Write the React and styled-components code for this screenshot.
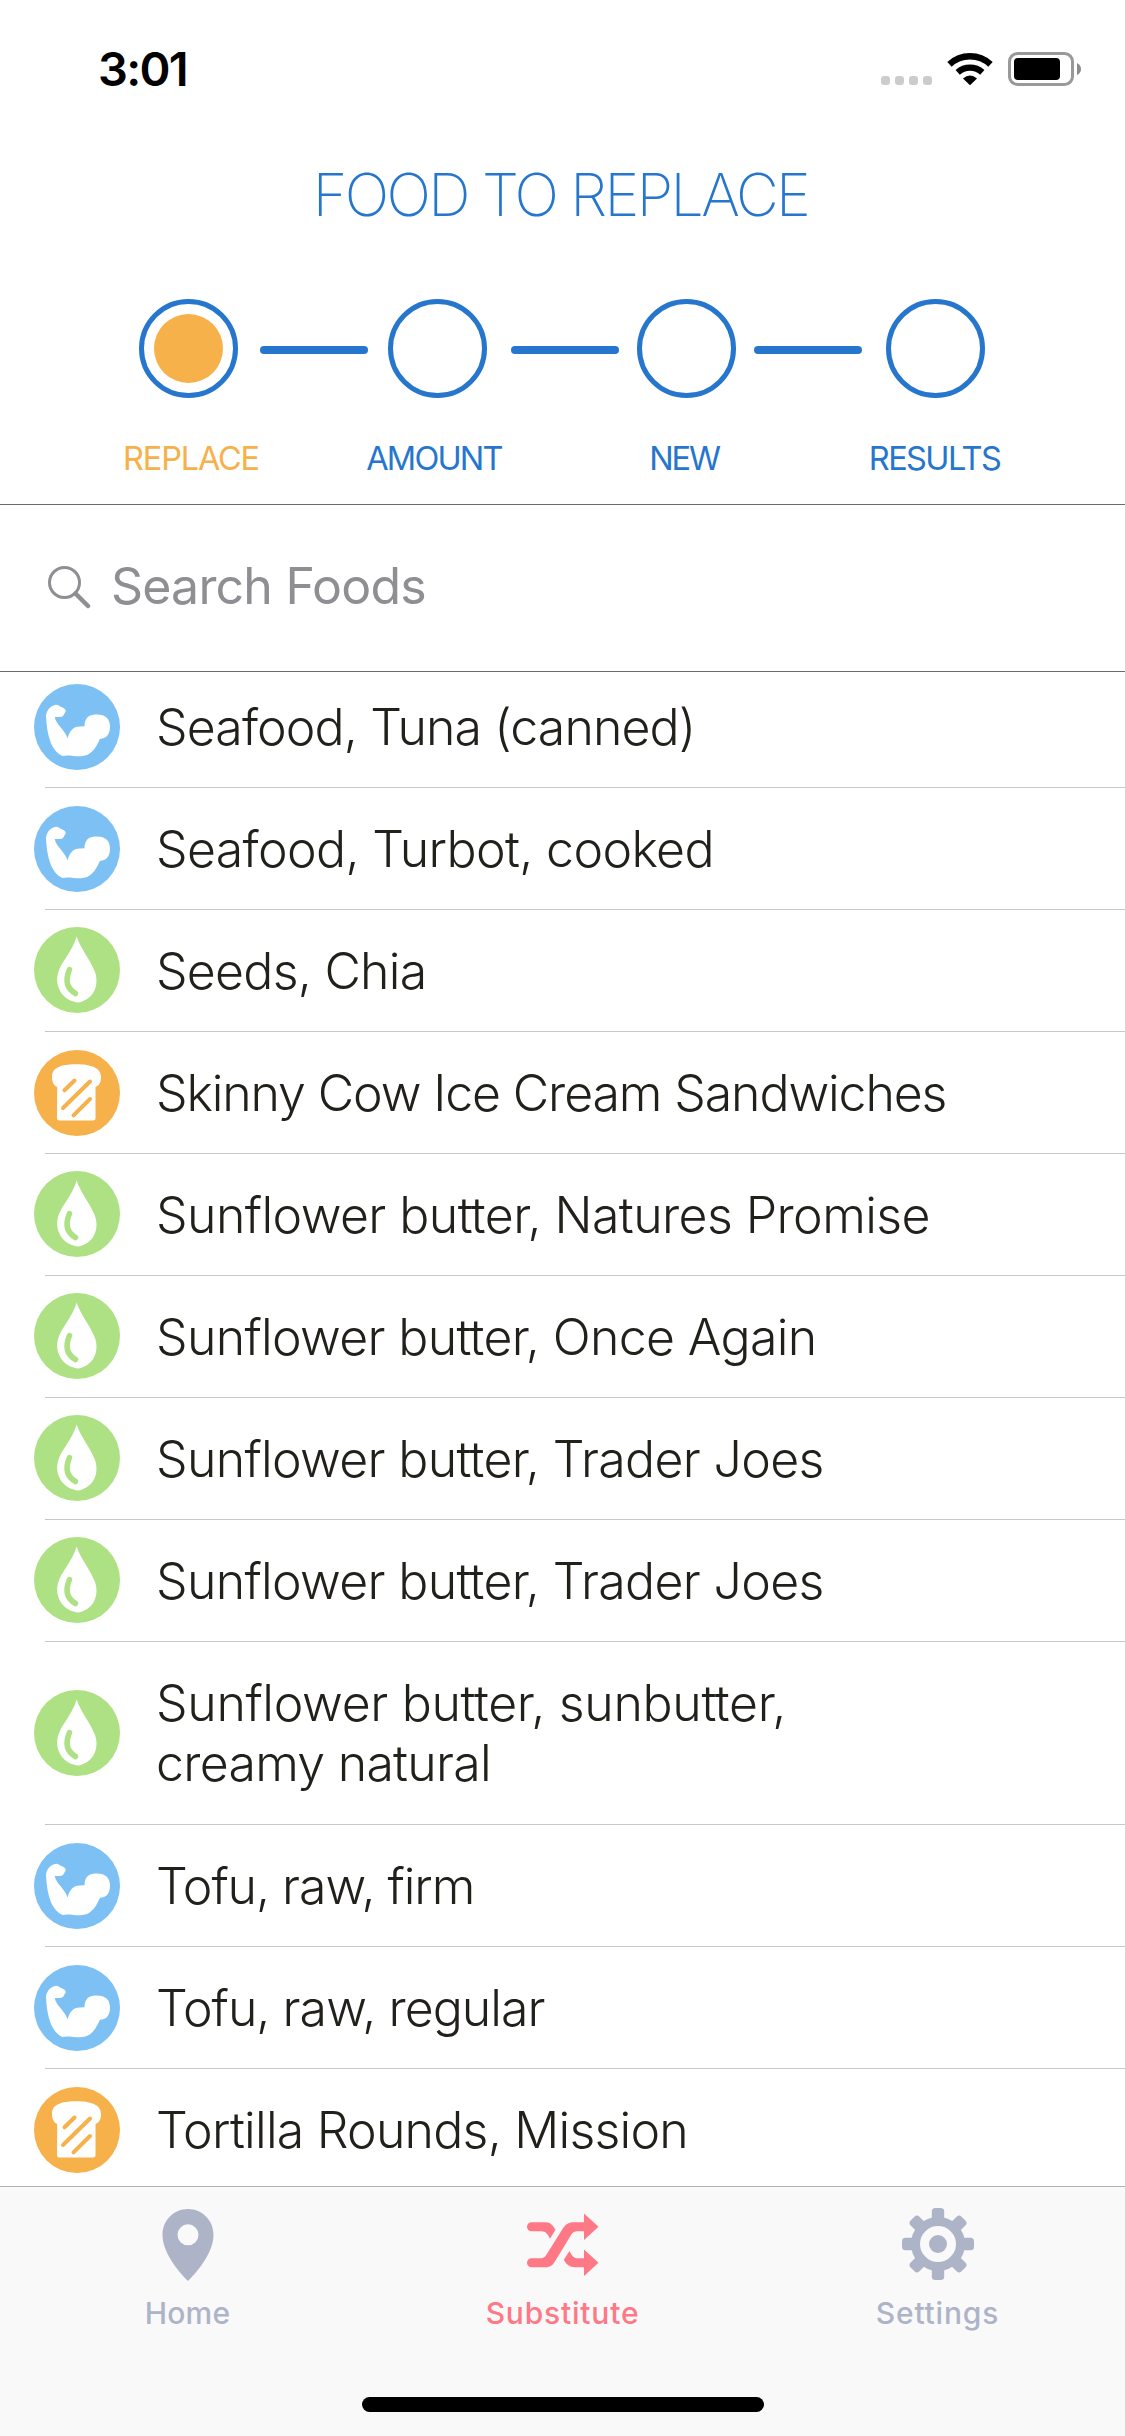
import React from "react";
import styled, { createGlobalStyle } from "styled-components";

const BLUE = "#2676ce";
const ORANGE = "#f6b14a";
const SKY = "#7dc0f4";
const GREEN = "#aee183";
const MUTED = "#aeb4c8";
const CORAL = "#ff7885";

const GlobalStyle = createGlobalStyle`
  *, *::before, *::after { box-sizing: border-box; }
  body { margin: 0; background: #fff; }
`;

const Screen = styled.div`
  width: 1125px;
  height: 2436px;
  display: flex;
  flex-direction: column;
  background: #fff;
  font-family: Inter, "Liberation Sans", sans-serif;
  overflow: hidden;
`;

const StatusBar = styled.header`
  height: 132px;
  flex: none;
  display: flex;
  justify-content: space-between;
  padding: 0 44px 0 98px;
`;

const Clock = styled.time`
  margin-top: 43px;
  font-size: 47px;
  line-height: 52px;
  font-weight: 600;
  letter-spacing: -1.7px;
  color: #000;
`;

const StatusIcons = styled.div`
  display: flex;
  align-items: flex-start;
  padding-top: 52px;
`;

const Title = styled.h1`
  flex: none;
  margin: 0;
  padding-right: 4px;
  height: 126px;
  line-height: 126px;
  text-align: center;
  font-size: 59px;
  font-weight: 200;
  letter-spacing: -2.6px;
  color: ${BLUE};
`;

const Stepper = styled.nav`
  flex: none;
  height: 247px;
  padding: 41px 89px 0 90px;
  border-bottom: 1px solid #6c6c70;
`;

const Track = styled.div`
  display: flex;
  padding-left: 49px;
`;

const StepDot = styled.span`
  width: 99px;
  height: 99px;
  flex: none;
  border: 5px solid ${BLUE};
  border-radius: 50%;
  display: grid;
  place-items: center;
  &::after {
    content: "";
    width: 69px;
    height: 69px;
    border-radius: 50%;
    background: ${(p) => (p.$active ? ORANGE : "transparent")};
  }
`;

const Connector = styled.span`
  flex: none;
  width: 108px;
  height: 8px;
  margin: 47px ${(p) => p.$after}px 0 ${(p) => p.$before}px;
  border-radius: 4px;
  background: ${BLUE};
`;

const StepLabels = styled.div`
  display: flex;
  margin-top: 41px;
`;

const StepLabel = styled.span`
  flex: none;
  width: ${(p) => p.$width}px;
  text-align: center;
  white-space: nowrap;
  font-size: 32.5px;
  line-height: 40px;
  font-weight: 400;
  letter-spacing: ${(p) => p.$track}px;
  color: ${(p) => (p.$active ? ORANGE : BLUE)};
`;

const SearchBar = styled.label`
  flex: none;
  height: 167px;
  display: flex;
  align-items: center;
  gap: 20px;
  padding: 0 48px 1px;
  border-bottom: 1px solid #6c6c70;
`;

const SearchInput = styled.input`
  flex: 1;
  border: 0;
  outline: 0;
  padding: 0;
  margin-bottom: 3px;
  background: transparent;
  font: 400 50px/60px Inter, "Liberation Sans", sans-serif;
  letter-spacing: -0.8px;
  &::placeholder { color: #8e8e93; opacity: 1; }
`;

const FoodList = styled.ul`
  flex: 1;
  min-height: 0;
  margin: 0;
  padding: 0;
  list-style: none;
  overflow: hidden;
  & > li:first-child { margin-top: -6px; }
`;

const FoodRow = styled.li`
  height: ${(p) => (p.$tall ? 183 : 122)}px;
  margin-left: 45px;
  border-bottom: 1px solid #c8c7cc;
  display: flex;
  align-items: center;
  gap: 36px;
`;

const FoodIcon = styled.svg`
  width: 86px;
  height: 86px;
  flex: none;
  margin: ${(p) => p.$top || 0}px 0 ${(p) => p.$bottom || 0}px -11px;
`;

const FoodName = styled.div`
  color: #22201b;
  font-size: 50px;
  line-height: 60px;
  font-weight: 300;
`;

const NameLine = styled.div`
  white-space: nowrap;
  letter-spacing: ${(p) => p.$track}px;
`;

const TabBar = styled.nav`
  flex: none;
  height: 250px;
  border-top: 1px solid #b2b2b2;
  background: #f9f9f9;
  display: flex;
  flex-direction: column;
  align-items: center;
`;

const Tabs = styled.div`
  width: 100%;
  display: grid;
  grid-template-columns: repeat(3, 1fr);
  height: 210px;
`;

const Tab = styled.a`
  display: flex;
  flex-direction: column;
  align-items: center;
  padding-top: 20px;
  color: ${(p) => (p.$active ? CORAL : MUTED)};
`;

const TabIcon = styled.svg`
  width: 76px;
  height: 76px;
  fill: currentColor;
`;

const TabLabel = styled.span`
  margin-top: 11px;
  font-size: 30px;
  line-height: 38px;
  font-weight: 500;
  letter-spacing: ${(p) => p.$track}px;
`;

const HomeIndicator = styled.div`
  width: 402px;
  height: 15px;
  border-radius: 8px;
  background: #000;
`;

const Protein = () => (
  <FoodIcon viewBox="0 0 86 86" $top={1}>
    <circle cx="43" cy="43" r="43" fill={SKY} />
    <path
      fill="#fff"
      d="M12 32C12.500 26 17 21.500 22 20.800C24 20.600 26 22.500 28.500 23.500C30.500 24.200 32 26 31.800 27.200L29 32C27 33.500 24 33 20.800 33C21.800 40.500 30 44.500 33.700 54.500C35 47 40 42.300 46 42.600L50.500 42.300C50.500 34 55 30.500 61.500 30.500C71.500 30 76 35 76 42.500C76 50 73 54.500 66 54.800C61 66 56 72 47 72.200C40 72.400 34 70.500 28.500 72C22 69.500 18 62 16.500 58C13.500 50 12.500 41 12 32Z"
    />
  </FoodIcon>
);

const Fat = () => (
  <FoodIcon viewBox="0 0 86 86" $bottom={1}>
    <circle cx="43" cy="43" r="43" fill={GREEN} />
    <path
      fill="#fff"
      d="M42.700 9.500C46 21 56 32 61 45C66 60 58 73 44.500 75.500C31 74.500 20 62 24 46C27 35 38 25 42.700 9.500Z"
    />
    <path d="M35.500 42.500Q28.500 59 41.500 66.500" fill="none" stroke={GREEN} strokeWidth="5.500" strokeLinecap="round" />
  </FoodIcon>
);

const Carb = () => (
  <FoodIcon viewBox="0 0 86 86">
    <circle cx="43" cy="43" r="43" fill={ORANGE} />
    <path
      fill="#fff"
      d="M23.200 37C19 35 18 31 18 26.500C18 16 31 14.300 42.700 14.300C55 14.300 67 17 67 27C67 32 65.500 35.500 61.500 37V68Q61.500 70.500 59 70.500H25.500Q23 70.500 23 68Z"
    />
    <path
      d="M30.500 40.300L40.500 30.500M29 58L56 31.500M39.500 65.300L56 49"
      fill="none"
      stroke={ORANGE}
      strokeWidth="4"
      strokeLinecap="round"
    />
  </FoodIcon>
);

const ICONS = { protein: Protein, fat: Fat, carb: Carb };

const FOODS = [
  { kind: "protein", lines: [["Seafood, Tuna (canned)", -0.88]] },
  { kind: "protein", lines: [["Seafood, Turbot, cooked", -0.64]] },
  { kind: "fat", lines: [["Seeds, Chia", -0.75]] },
  { kind: "carb", lines: [["Skinny Cow Ice Cream Sandwiches", -1.12]] },
  { kind: "fat", lines: [["Sunflower butter, Natures Promise", -0.57]] },
  { kind: "fat", lines: [["Sunflower butter, Once Again", -0.67]] },
  { kind: "fat", lines: [["Sunflower butter, Trader Joes", -0.67]] },
  { kind: "fat", lines: [["Sunflower butter, Trader Joes", -0.67]] },
  { kind: "fat", lines: [["Sunflower butter, sunbutter,", -0.33], ["creamy natural", -0.72]] },
  { kind: "protein", lines: [["Tofu, raw, firm", -1.05]] },
  { kind: "protein", lines: [["Tofu, raw, regular", -0.96]] },
  { kind: "carb", lines: [["Tortilla Rounds, Mission", -0.77]] },
];

const StatusGlyphs = () => (
  <svg width="202" height="34" viewBox="879 52 202 34">
    <g fill="#ccc">
      {[881, 895, 909, 923].map((x) => (
        <rect key={x} x={x} y="76" width="9" height="9" rx="3.200" />
      ))}
    </g>
    <g fill="none" stroke="#000" strokeWidth="6.400">
      <path d="M949.500 64.300A30 30 0 0 1 990.500 64.300" />
      <path d="M957.700 72.300A18.500 18.500 0 0 1 982.300 72.300" />
    </g>
    <path d="M963 78.500Q970 72.300 977 78.500L970 85.200Z" />
    <rect x="1009.500" y="53.500" width="63" height="31" rx="8" fill="none" stroke="#999" strokeWidth="3" />
    <rect x="1014" y="58" width="46" height="22" rx="4" />
    <path d="M1077 63Q1081 65 1081 69T1077 75Z" fill="#8c8c8c" />
  </svg>
);

const HomeTab = () => (
  <TabIcon viewBox="0 0 76 76">
    <path
      fillRule="evenodd"
      d="M38 2C52 2 63.500 13 63.500 28C63.500 44 50 62 38 74C26 62 12.500 44 12.500 28C12.500 13 24 2 38 2ZM38 17.300A10.500 10.500 0 1 0 38 38.300A10.500 10.500 0 1 0 38 17.300Z"
    />
  </TabIcon>
);

const SubstituteTab = () => (
  <TabIcon viewBox="0 0 76 76">
    <path d="M6.500 15.300H21C25.500 15.300 28 18.500 30.500 22.800L25 31.800C22.500 27 21 24.300 16 24.300H6.500A4.500 4.500 0 0 1 6.500 15.300Z" />
    <path d="M6.500 51.300H15C19 51.300 20.500 49.500 22.500 46L37.500 22C40.500 17.500 43.500 15.300 48.500 15.300H59V6.500L73.500 19.800L59 33V24.300H52.500C48.500 24.300 47 26.500 45 29.700L30.500 53.500C28 58 25.500 60.300 20.500 60.300H6.500A4.500 4.500 0 0 1 6.500 51.300Z" />
    <path d="M44.500 44C47 49.300 49.500 51.300 53 51.300H59V42.500L73.500 55.800L59 69V60.300H50C44.500 60.300 41.500 57.500 38.800 52.800Z" />
  </TabIcon>
);

const SettingsTab = () => (
  <TabIcon viewBox="0 0 76 76">
    {[0, 45, 90, 135].map((a) => (
      <g key={a} transform={`rotate(${a} 38 37)`}>
        <rect x="31.800" y="1" width="12.400" height="18" rx="3.500" />
        <rect x="31.800" y="55" width="12.400" height="18" rx="3.500" />
      </g>
    ))}
    <circle cx="38" cy="37" r="22.500" fill="none" stroke="currentColor" strokeWidth="9" />
    <circle cx="38" cy="37" r="9" />
  </TabIcon>
);

export default function App() {
  return (
    <Screen>
      <GlobalStyle />
      <StatusBar>
        <Clock>3:01</Clock>
        <StatusIcons>
          <StatusGlyphs />
        </StatusIcons>
      </StatusBar>
      <Title>FOOD TO REPLACE</Title>
      <Stepper>
        <Track>
          <StepDot $active />
          <Connector $before={22} $after={20} />
          <StepDot />
          <Connector $before={24} $after={18} />
          <StepDot />
          <Connector $before={18} $after={24} />
          <StepDot />
        </Track>
        <StepLabels>
          <StepLabel $active $width={202} $track={-1.2}>REPLACE</StepLabel>
          <StepLabel $width={284} $track={-1.8}>AMOUNT</StepLabel>
          <StepLabel $width={216} $track={-2.2}>NEW</StepLabel>
          <StepLabel $width={285} $track={-1.6}>RESULTS</StepLabel>
        </StepLabels>
      </Stepper>
      <SearchBar>
        <svg width="43" height="43" viewBox="0 0 43 43" fill="none" stroke="#8e8e93">
          <circle cx="16.500" cy="16.500" r="15" strokeWidth="3" />
          <path d="M27.500 27.500L40 40" strokeWidth="4.500" strokeLinecap="round" />
        </svg>
        <SearchInput placeholder="Search Foods" aria-label="Search Foods" />
      </SearchBar>
      <FoodList>
        {FOODS.map(({ kind, lines }, i) => {
          const Icon = ICONS[kind];
          return (
            <FoodRow key={i} $tall={lines.length > 1}>
              <Icon />
              <FoodName>
                {lines.map(([text, track]) => (
                  <NameLine key={text} $track={track}>{text}</NameLine>
                ))}
              </FoodName>
            </FoodRow>
          );
        })}
      </FoodList>
      <TabBar>
        <Tabs>
          <Tab>
            <HomeTab />
            <TabLabel $track={0.2}>Home</TabLabel>
          </Tab>
          <Tab $active>
            <SubstituteTab />
            <TabLabel $track={0.8}>Substitute</TabLabel>
          </Tab>
          <Tab>
            <SettingsTab />
            <TabLabel $track={0.8}>Settings</TabLabel>
          </Tab>
        </Tabs>
        <HomeIndicator />
      </TabBar>
    </Screen>
  );
}
